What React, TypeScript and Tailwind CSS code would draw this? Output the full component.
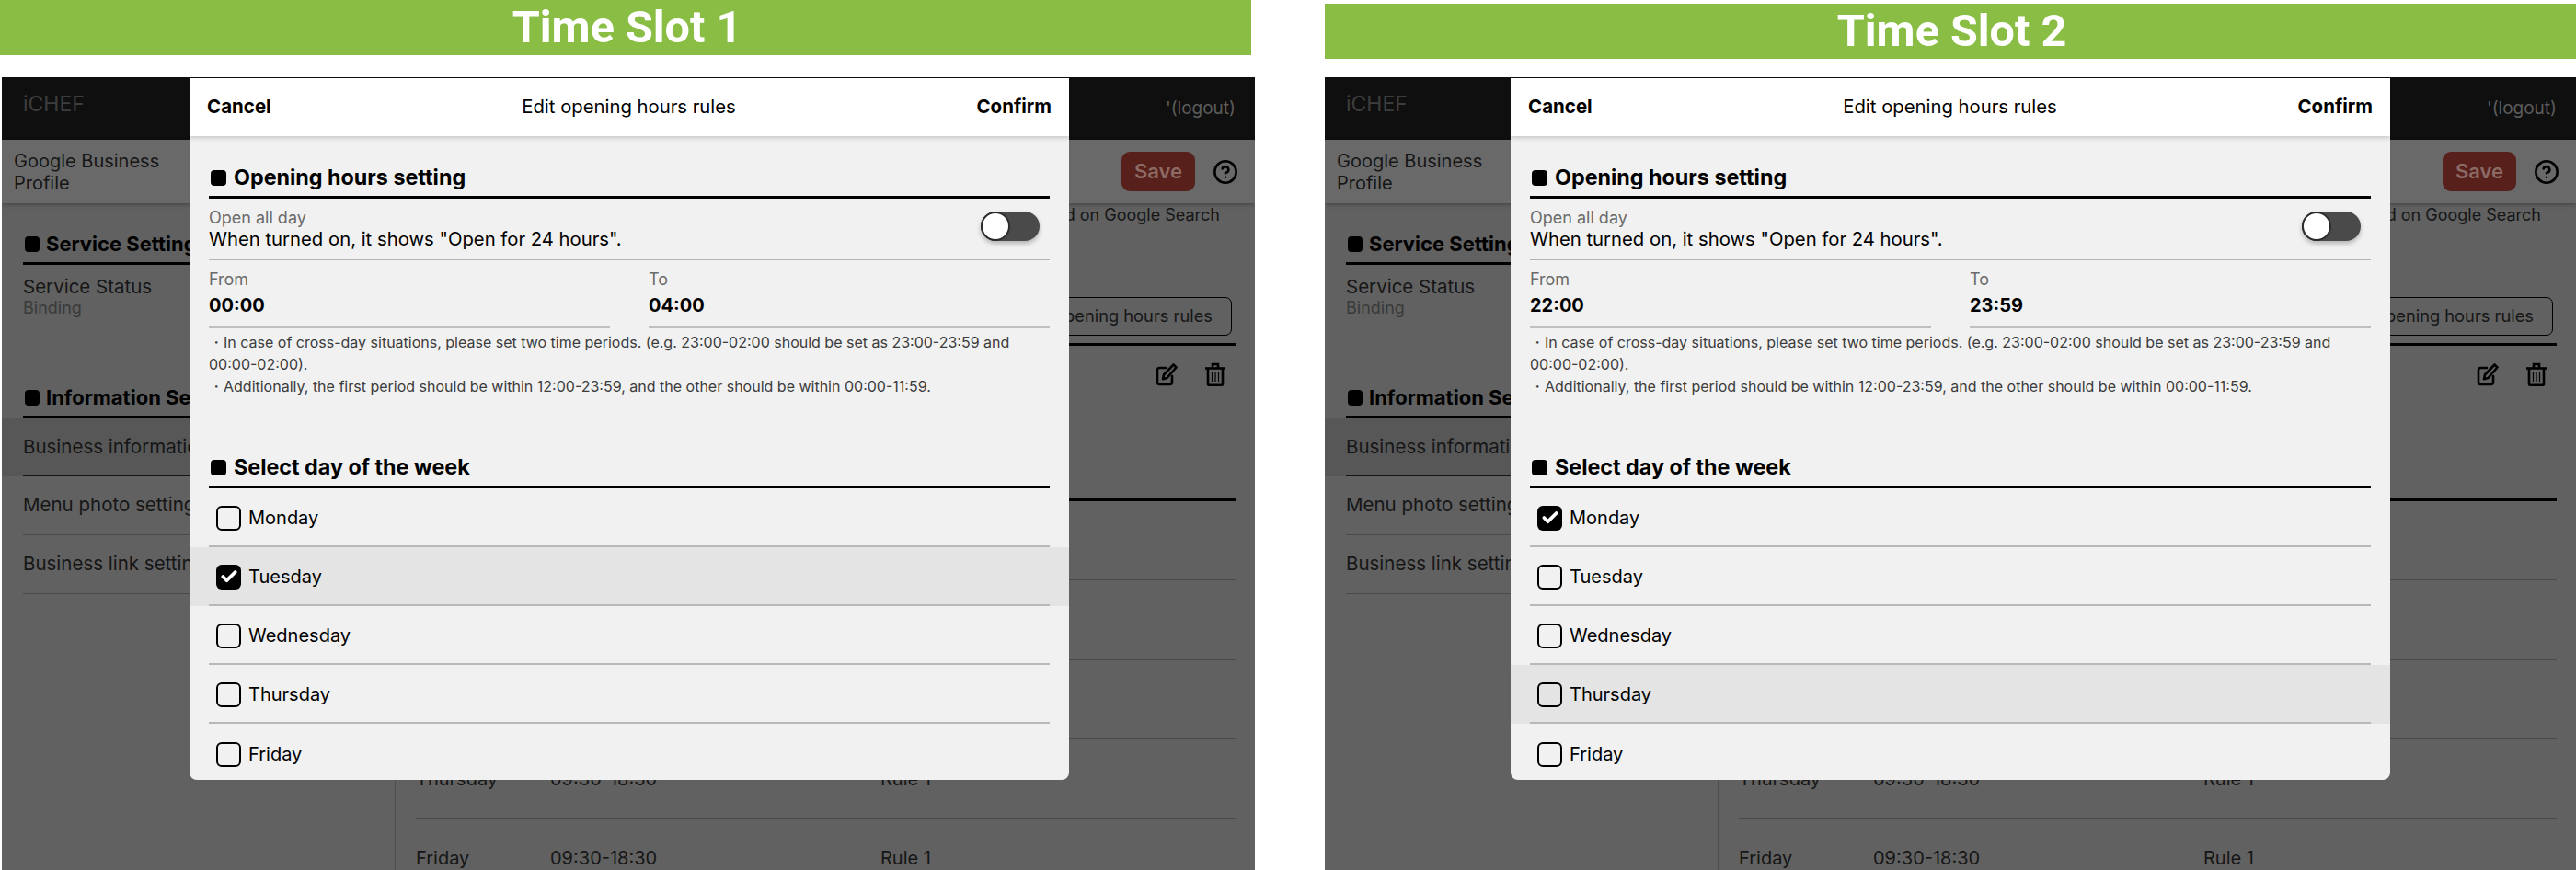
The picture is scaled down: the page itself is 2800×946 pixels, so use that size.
import React from 'react';
import { Check, CircleHelp } from 'lucide-react';

const DAYS = ['Monday', 'Tuesday', 'Wednesday', 'Thursday', 'Friday'];

interface SlotProps {
  from: string;
  to: string;
  checked: string;
  hovered: string;
  modalClass: string;
}

const EditIcon = () => (
  <svg width="24" height="26" viewBox="0 0 24 26" fill="none" stroke="#000" strokeWidth="2.6" strokeLinejoin="round" strokeLinecap="round">
    <path d="M11 6H4.5A2.5 2.5 0 0 0 2 8.5v13A2.5 2.5 0 0 0 4.5 24h11a2.5 2.5 0 0 0 2.5-2.5V15" />
    <path d="M19.5 2.5l3 3L12.5 17l-4.5 1.2L9 13.5z" />
  </svg>
);

const TrashIcon = () => (
  <svg width="24" height="26" viewBox="0 0 24 26" fill="none" stroke="#000" strokeWidth="2.6">
    <path d="M1 6.5h22" />
    <path d="M9 6V2h6v4" />
    <path d="M4 7v16.5a1.2 1.2 0 0 0 1.2 1.2h13.6a1.2 1.2 0 0 0 1.2-1.2V7" />
    <path d="M8.5 11v10M12 11v10M15.5 11v10" strokeWidth="1.2" />
  </svg>
);

const Heading = ({ children }: { children: React.ReactNode }) => (
  <div className="flex items-center gap-[8px] h-[40px] pb-[2px] border-b-[3px] border-black font-bold text-[23.3px] text-black whitespace-nowrap overflow-hidden">
    <span className="w-[17px] h-[17px] ml-[2px] rounded-[4px] bg-black shrink-0" />
    {children}
  </div>
);

const SideHeading = ({ children }: { children: React.ReactNode }) => (
  <div className="flex items-center gap-[7px] h-[40px] pb-[2px] border-b-[3px] border-black font-bold text-[22px] text-black whitespace-nowrap overflow-hidden">
    <span className="w-[16px] h-[17px] ml-[2px] rounded-[4px] bg-black shrink-0" />
    {children}
  </div>
);

// dimmed page that sits behind the dialog
const Backdrop = () => (
  <div className="h-full flex flex-col bg-[#616161] text-[#161616]">
    <div className="h-[68px] shrink-0 bg-[#0f0f0f] flex items-center justify-between pl-[23px] pr-[21px]">
      <span className="text-[#3d3d3d] text-[23px] -mt-[10px]">iCHEF</span>
      <span className="text-[#5c5c5c] text-[19px]">'(logout)</span>
    </div>
    <div className="h-[69px] shrink-0 bg-[#696969] shadow-[0_2px_4px_rgba(0,0,0,0.25)] z-10 flex items-center justify-between pl-[13px] pr-[18px]">
      <div className="text-[20px] leading-[24px] w-[180px]">Google Business Profile</div>
      <div className="flex items-center gap-[19px]">
        <div className="w-[80px] h-[43px] rounded-[9px] bg-[#58201a] text-[#8c6b66] font-semibold text-[22px] flex items-center justify-center">
          Save
        </div>
        <CircleHelp size={28} color="#000" strokeWidth={2.2} />
      </div>
    </div>
    <div className="flex-1 flex min-h-0 overflow-hidden">
      <div className="w-[428px] shrink-0 border-r border-[#4e4e4e]">
        <div className="mx-[23px] mt-[27px]">
          <SideHeading>Service Settings</SideHeading>
        </div>
        <div className="mx-[23px] h-[67px] border-b border-[#4a4a4a] pt-[11px]">
          <div className="text-[20.5px] leading-[26px]">Service Status</div>
          <div className="text-[18px] leading-[20px] text-[#3a3a3a]">Binding</div>
        </div>
        <div className="mx-[23px] mt-[60px]">
          <SideHeading>Information Settings</SideHeading>
        </div>
        <div className="h-[63px] bg-[#575757] px-[23px]">
          <div className="h-full flex items-center border-b border-[#161616] text-[20.5px]">Business information</div>
        </div>
        <div className="mx-[23px] h-[64px] flex items-center border-b border-[#4a4a4a] text-[20.5px]">Menu photo settings</div>
        <div className="mx-[23px] h-[64px] flex items-center border-b border-[#4a4a4a] text-[20.5px]">Business link settings</div>
      </div>
      <div className="flex-1 min-w-0 pl-[22px] pr-[21px] text-[20px]">
        <div className="text-right text-[18px] leading-[24px] pt-px pr-[17px]">
          Information displayed on Google Search
        </div>
        <div className="flex justify-end h-[131px] items-end border-b-[3px] border-black pb-[8px] -mt-[1px]">
          <div className="h-[42px] px-[20px] mr-[4px] border border-black rounded-[7px] flex items-center text-[18.3px]">
            Add opening hours rules
          </div>
        </div>
        <div className="flex items-center justify-end gap-[29px] h-[66px] pb-[3px] border-b border-[#4a4a4a] pr-[10px]">
          <EditIcon />
          <TrashIcon />
        </div>
        <div className="h-[103px] border-b-[3px] border-black" />
        {DAYS.map(day => (
          <div key={day} className="h-[86.4px] flex items-center border-b border-[#4a4a4a]">
            <span className="w-[146px]">{day}</span>
            <span className="w-[359px]">09:30-18:30</span>
            <span>Rule 1</span>
          </div>
        ))}
      </div>
    </div>
  </div>
);

const HoursDialog = ({ from, to, checked, hovered, modalClass }: SlotProps) => (
  <div className={modalClass}>
    <div className="h-[63px] shrink-0 bg-white shadow-[0_2px_5px_rgba(0,0,0,0.18)] z-10 flex items-center justify-between px-[19px] text-black text-[20.5px]">
      <span className="font-bold">Cancel</span>
      <span className="text-[20.3px] ml-[11px]">Edit opening hours rules</span>
      <span className="font-bold">Confirm</span>
    </div>
    <div className="flex-1 min-h-0 overflow-hidden">
      <div className="mx-[21px] mt-[28px]">
        <Heading>Opening hours setting</Heading>
        <div className="h-[67px] flex items-center justify-between border-b border-[#b4b4b4] pr-[11px]">
          <div>
            <div className="text-[18px] leading-[22px] text-[#6b6b6b]">Open all day</div>
            <div className="text-[20.3px] leading-[24px] text-black">When turned on, it shows "Open for 24 hours".</div>
          </div>
          <div className="relative w-[64px] h-[32px] rounded-full bg-[#4a4a4a] shadow-[0_3px_5px_rgba(0,0,0,0.25)] -mt-[6px]">
            <div className="absolute left-0 top-0 w-[32px] h-[32px] rounded-full bg-white border-2 border-[#2c2c2c]" />
          </div>
        </div>
        <div className="flex">
          <div className="w-[436px] h-[74px] border-b-2 border-[#c0c0c0] pt-[9px]">
            <div className="text-[18px] leading-[24px] text-[#6b6b6b]">From</div>
            <div className="font-bold text-[20px] leading-[28px] mt-[2px] text-black">{from}</div>
          </div>
          <div className="ml-[42px] flex-1 h-[74px] border-b-2 border-[#c0c0c0] pt-[9px]">
            <div className="text-[18px] leading-[24px] text-[#6b6b6b]">To</div>
            <div className="font-bold text-[20px] leading-[28px] mt-[2px] text-black">{to}</div>
          </div>
        </div>
        <div className="text-[16px] leading-[24px] text-[#3c3c3c] pt-[3px]">
          <div>・In case of cross-day situations, please set two time periods. (e.g. 23:00-02:00 should be set as 23:00-23:59 and 00:00-02:00).</div>
          <div>・Additionally, the first period should be within 12:00-23:59, and the other should be within 00:00-11:59.</div>
        </div>
        <div className="mt-[59px]">
          <Heading>Select day of the week</Heading>
        </div>
      </div>
      {DAYS.map(day => (
        <div key={day} className={day === hovered ? 'bg-[#e4e4e4]' : ''}>
          <div className={`mx-[21px] h-[64px] flex items-center gap-[8px] pl-[8px] pt-[2px] text-[20px] text-black ${day === 'Friday' ? '' : 'border-b-2 border-[#b8b8b8]'}`}>
            {day === checked ? (
              <span className="w-[27px] h-[27px] rounded-[6px] bg-black flex items-center justify-center">
                <Check size={20} color="#fff" strokeWidth={4.5} />
              </span>
            ) : (
              <span className="w-[27px] h-[27px] rounded-[6px] border-2 border-black" />
            )}
            {day}
          </div>
        </div>
      ))}
    </div>
  </div>
);

const Slot = (props: SlotProps) => (
  <div className="relative h-full overflow-hidden">
    <Backdrop />
    <HoursDialog {...props} />
  </div>
);

export default function App() {
  return (
    <div className="flex w-[2800px] h-[946px] overflow-hidden bg-white font-['Inter',sans-serif]">
      <div className="w-[1364px] shrink-0 flex flex-col">
        <div className="w-[1360px] h-[60px] shrink-0 pl-[3px] bg-[#89bd43] text-white text-[48.5px] font-bold font-['Roboto',sans-serif] flex items-center justify-center">
          Time Slot 1
        </div>
        <div className="flex-1 min-h-0 mt-[24px] ml-[2px]">
          <Slot
            from="00:00"
            to="04:00"
            checked="Tuesday"
            hovered="Tuesday"
            modalClass="absolute z-20 left-[204px] top-[1px] w-[956px] h-[763px] flex flex-col rounded-b-[8px] overflow-hidden bg-[#f1f1f1]"
          />
        </div>
      </div>
      <div className="w-[1360px] ml-[76px] shrink-0 flex flex-col">
        <div className="h-[60px] mt-[4px] shrink-0 pl-[3px] bg-[#89bd43] text-white text-[48.5px] font-bold font-['Roboto',sans-serif] flex items-center justify-center">
          Time Slot 2
        </div>
        <div className="flex-1 min-h-0 mt-[20px]">
          <Slot
            from="22:00"
            to="23:59"
            checked="Monday"
            hovered="Thursday"
            modalClass="absolute z-20 left-[202px] top-[1px] w-[956px] h-[763px] flex flex-col rounded-b-[8px] overflow-hidden bg-[#f1f1f1]"
          />
        </div>
      </div>
    </div>
  );
}
